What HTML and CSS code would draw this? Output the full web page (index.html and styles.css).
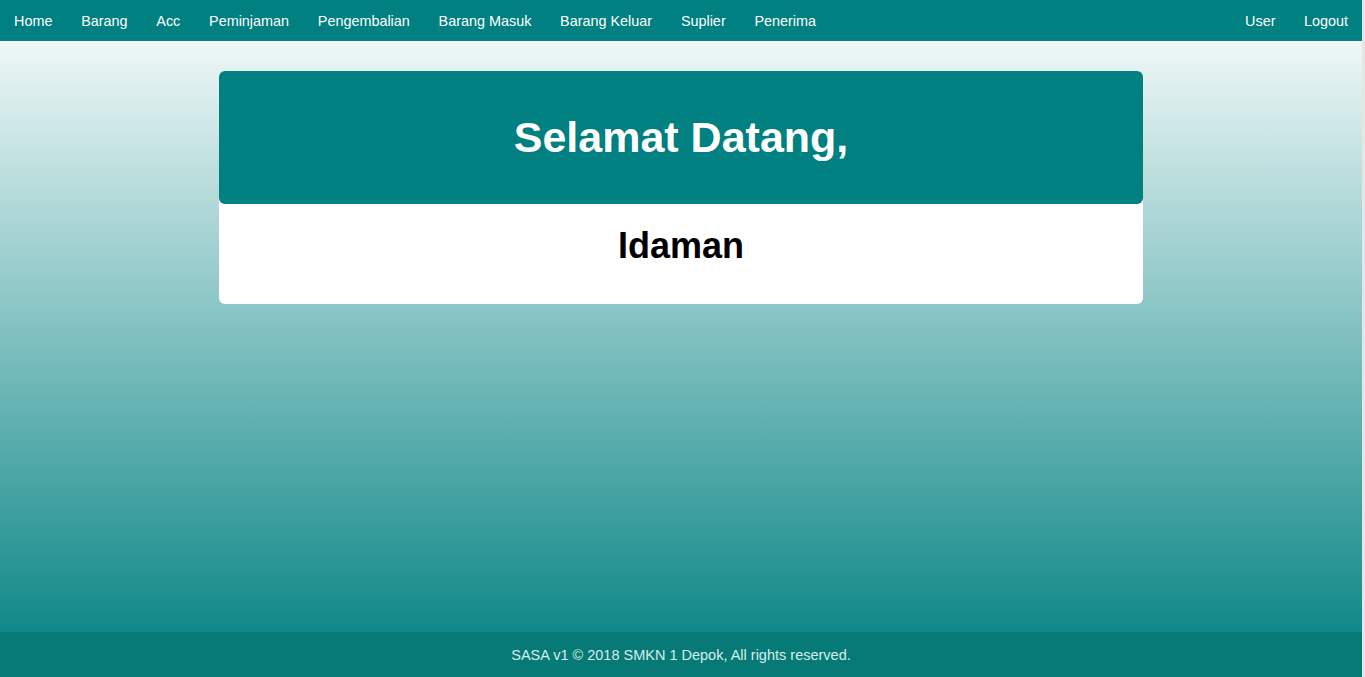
FILE: index.html
```html
<!DOCTYPE html>
<html lang="id">
<head>
<meta charset="utf-8">
<title>SASA v1</title>
<link rel="stylesheet" href="styles.css">
</head>
<body>
<nav class="navbar">
  <ul class="nav-left">
    <li><a href="#">Home</a></li>
    <li><a href="#">Barang</a></li>
    <li><a href="#">Acc</a></li>
    <li><a href="#">Peminjaman</a></li>
    <li><a href="#">Pengembalian</a></li>
    <li><a href="#">Barang Masuk</a></li>
    <li><a href="#">Barang Keluar</a></li>
    <li><a href="#">Suplier</a></li>
    <li><a href="#">Penerima</a></li>
  </ul>
  <ul class="nav-right">
    <li><a href="#">User</a></li>
    <li><a href="#">Logout</a></li>
  </ul>
</nav>
<main class="main">
  <section class="card">
    <div class="card-head"><h1>Selamat Datang,</h1></div>
    <div class="card-body"><h2>Idaman</h2></div>
  </section>
</main>
<footer class="footer">SASA v1 &copy; 2018 SMKN 1 Depok, All rights reserved.</footer>
</body>
</html>
```
FILE: styles.css
```css
html {
  background: #e6e6e6;
  height: 100%;
}
body {
  margin: 0 3px 0 0;
  min-height: 100vh;
  display: flex;
  flex-direction: column;
  font-family: "Liberation Sans", Arial, sans-serif;
  background: linear-gradient(to bottom, #ffffff 0%, #008080 100%);
}
.navbar {
  height: 41px;
  background: #008080;
  display: flex;
  justify-content: space-between;
  align-items: center;
}
.navbar ul {
  list-style: none;
  margin: 0;
  padding: 0;
  display: flex;
}
.navbar a {
  display: block;
  padding: 1px 14.75px 0 14px;
  color: #ffffff;
  text-decoration: none;
  font-size: 14.4px;
  line-height: 40px;
}
.nav-right a {
  padding: 1px 14px 0 14.5px;
}
.main {
  flex: 1;
  display: flex;
  justify-content: center;
  align-items: flex-start;
  padding-top: 30px;
}
.card {
  width: 924px;
  background: #ffffff;
  border-radius: 6px;
}
.card-head {
  background: #008080;
  border-radius: 6px;
  height: 133px;
  display: flex;
  align-items: center;
  justify-content: center;
}
.card-head h1 {
  margin: 0;
  color: #ffffff;
  font-size: 43px;
  font-weight: bold;
}
.card-body {
  height: 100px;
  display: flex;
  justify-content: center;
  padding-top: 21px;
  box-sizing: border-box;
}
.card-body h2 {
  margin: 0;
  font-size: 36px;
  font-weight: bold;
  color: #000000;
  line-height: 42px;
}
.footer {
  height: 45px;
  background: #077a78;
  color: #d4eeec;
  font-size: 14.5px;
  display: flex;
  align-items: center;
  justify-content: center;
}
```
